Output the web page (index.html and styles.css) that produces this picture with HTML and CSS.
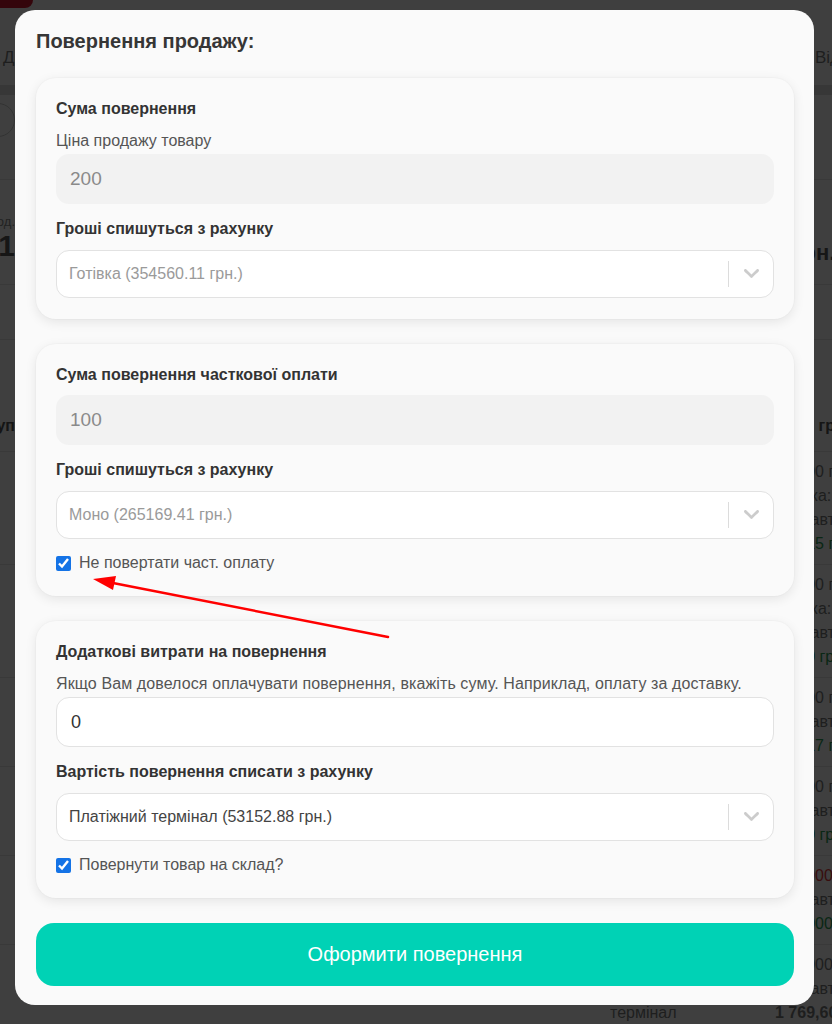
FILE: index.html
```html
<!DOCTYPE html>
<html lang="uk">
<head>
<meta charset="utf-8">
<title>Повернення продажу</title>
<link rel="stylesheet" href="styles.css">
</head>
<body>
<div class="app">
  <div class="app-top"><span class="brand"></span></div>
  <nav class="row tabs"><span class="l">Дашборд</span><span class="m"></span><span class="t"></span><span class="r tab-r">Відгуки</span></nav>
  <div class="band"></div>
  <div class="row toolbar"><span class="l end"><span class="pill"></span></span><span class="m"></span><span class="t"></span><span class="r"></span></div>
  <div class="row stats">
    <div class="l end col"><small>Сума прод.</small><b class="big">11</b></div>
    <span class="m"></span><span class="t"></span>
    <div class="r col"><b class="stat-r">0 грн.</b></div>
  </div>
  <div class="row filler"><span class="l"></span><span class="m"></span><span class="t"></span><span class="r"></span></div>
  <div class="row caption"><span class="l"></span><span class="m"></span><span class="t"></span><span class="r"></span></div>
  <div class="row thead"><b class="l end">Тип груп</b><span class="m"></span><span class="t"></span><b class="r">Ціна, грн</b></div>
  <div class="row trow"><span class="l"></span><span class="m"></span><span class="t"></span>
    <div class="r col"><span>12 200 грн</span><span>Готівка:</span><span>Тип: авто</span><span class="green">12 215 грн</span></div></div>
  <div class="row trow"><span class="l"></span><span class="m"></span><span class="t"></span>
    <div class="r col"><span>12 200 грн</span><span>Готівка:</span><span>Тип: авто</span><span class="green">12 20 грн</span></div></div>
  <div class="row trow"><span class="l"></span><span class="m"></span><span class="t"></span>
    <div class="r col"><span>12 200 грн</span><span>Тип: авто</span><span class="green">12 217 грн</span></div></div>
  <div class="row trow"><span class="l"></span><span class="m"></span><span class="t"></span>
    <div class="r col"><span>12 200 грн</span><span>Тип: авто</span><span class="green">12 20 грн</span></div></div>
  <div class="row trow"><span class="l"></span><span class="m"></span><span class="t"></span>
    <div class="r col"><span class="red">12 2000</span><span>Тип: авто</span><span class="green">12 2000</span></div></div>
  <div class="row trow"><span class="l"></span><span class="m"></span>
    <div class="t col"><span>&nbsp;</span><span>Платіжний</span><span>термінал</span></div>
    <div class="r col"><span>12 2000</span><span>Тип: авто</span><b>1 769,60</b></div></div>
</div>

<div class="overlay">
  <section class="modal">
    <h1 class="modal-title">Повернення продажу:</h1>

    <div class="card">
      <div class="card-title">Сума повернення</div>
      <div class="hint">Ціна продажу товару</div>
      <div class="input input-ro input-after-hint">200</div>
      <div class="card-title label">Гроші спишуться з рахунку</div>
      <div class="select">
        <span class="select-value placeholder">Готівка (354560.11 грн.)</span>
        <span class="sep"></span>
        <span class="indicator"><svg width="15" height="10" viewBox="4.2 7.2 11.6 7.6"><path fill="#ccc" d="M4.516 7.548c0.436-0.446 1.043-0.481 1.576 0l3.908 3.747 3.908-3.747c0.533-0.481 1.141-0.446 1.574 0 0.436 0.445 0.408 1.197 0 1.615-0.406 0.418-4.695 4.502-4.695 4.502-0.217 0.223-0.502 0.335-0.787 0.335s-0.57-0.112-0.789-0.335c0 0-4.287-4.084-4.695-4.502s-0.436-1.170 0-1.615z"/></svg></span>
      </div>
    </div>

    <div class="card">
      <div class="card-title">Сума повернення часткової оплати</div>
      <div class="input input-ro input-after-title">100</div>
      <div class="card-title label">Гроші спишуться з рахунку</div>
      <div class="select">
        <span class="select-value placeholder">Моно (265169.41 грн.)</span>
        <span class="sep"></span>
        <span class="indicator"><svg width="15" height="10" viewBox="4.2 7.2 11.6 7.6"><path fill="#ccc" d="M4.516 7.548c0.436-0.446 1.043-0.481 1.576 0l3.908 3.747 3.908-3.747c0.533-0.481 1.141-0.446 1.574 0 0.436 0.445 0.408 1.197 0 1.615-0.406 0.418-4.695 4.502-4.695 4.502-0.217 0.223-0.502 0.335-0.787 0.335s-0.57-0.112-0.789-0.335c0 0-4.287-4.084-4.695-4.502s-0.436-1.170 0-1.615z"/></svg></span>
      </div>
      <label class="check"><input type="checkbox" checked><span>Не повертати част. оплату</span></label>
    </div>

    <div class="card">
      <div class="card-title">Додаткові витрати на повернення</div>
      <div class="hint hint-long">Якщо Вам довелося оплачувати повернення, вкажіть суму. Наприклад, оплату за доставку.</div>
      <div class="input input-edit input-after-hint">0</div>
      <div class="card-title label">Вартість повернення списати з рахунку</div>
      <div class="select">
        <span class="select-value">Платіжний термінал (53152.88 грн.)</span>
        <span class="sep"></span>
        <span class="indicator"><svg width="15" height="10" viewBox="4.2 7.2 11.6 7.6"><path fill="#ccc" d="M4.516 7.548c0.436-0.446 1.043-0.481 1.576 0l3.908 3.747 3.908-3.747c0.533-0.481 1.141-0.446 1.574 0 0.436 0.445 0.408 1.197 0 1.615-0.406 0.418-4.695 4.502-4.695 4.502-0.217 0.223-0.502 0.335-0.787 0.335s-0.57-0.112-0.789-0.335c0 0-4.287-4.084-4.695-4.502s-0.436-1.170 0-1.615z"/></svg></span>
      </div>
      <label class="check"><input type="checkbox" checked><span>Повернути товар на склад?</span></label>
    </div>

    <button class="submit" type="button">Оформити повернення</button>

    <svg class="annotation" width="799" height="994" viewBox="0 0 799 994">
      <line x1="98" y1="573" x2="373" y2="627" stroke="#ff0000" stroke-width="2.5" stroke-linecap="round"/>
      <polygon points="78,569 101,566 98,580" fill="#ff0000"/>
    </svg>
  </section>
</div>
</body>
</html>
```

FILE: styles.css
```css
* { box-sizing: border-box; }

html, body {
  margin: 0;
  padding: 0;
}

body {
  width: 832px;
  height: 1024px;
  overflow: hidden;
  position: relative;
  background: #f9fbfa;
  font-family: "Liberation Sans", Arial, sans-serif;
}

/* ---------- background page (under the overlay) ---------- */
.app {
  width: 900px;
  color: #7a7a7a;
  font-size: 16px;
}

.row {
  display: grid;
  grid-template-columns: 15px 595px 165px 125px;
}

.row > * {
  overflow: hidden;
  white-space: nowrap;
}

.end {
  display: flex;
  justify-content: flex-end;
}

.col {
  display: flex;
  flex-direction: column;
}

.app-top { height: 30px; }

.brand {
  display: block;
  width: 33px;
  height: 8px;
  background: #d0142e;
  border-radius: 0 0 14px 0;
}

.tabs {
  height: 55px;
  align-items: center;
  font-size: 17px;
}

.tabs .l { padding-left: 3px; }
.tab-r { padding-left: 40px; }

.band {
  height: 10px;
  background: #dcdcdc;
}

.toolbar {
  height: 85px;
  border-bottom: 1px solid #e2e2e2;
}

.pill {
  flex: none;
  display: block;
  margin-top: 8px;
  width: 40px;
  height: 34px;
  border: 1px solid #c8c8c8;
  border-radius: 17px;
}

.stats {
  height: 105px;
  border-bottom: 1px solid #e2e2e2;
}

.stats .l {
  align-items: flex-end;
  justify-content: flex-start;
  padding-top: 34px;
}

.stats small {
  font-size: 13px;
  color: #8a8a8a;
}

.big {
  font-size: 30px;
  line-height: 34px;
  color: #5a5a5a;
}

.stats .r {
  padding-top: 60px;
}

.stat-r {
  font-size: 22px;
  color: #5a5a5a;
}

.filler {
  height: 55px;
  border-bottom: 1px solid #e2e2e2;
}

.caption { height: 60px; }

.thead {
  height: 52px;
  align-items: center;
  border-bottom: 1px solid #e2e2e2;
  color: #555;
  font-size: 16px;
}

.trow {
  padding: 8px 0;
  line-height: 24px;
  border-bottom: 1px solid #e2e2e2;
}

.green { color: #2a9a55; }
.red { color: #e03a3a; }

/* ---------- overlay + modal ---------- */
.overlay {
  position: fixed;
  inset: 0;
  background: rgba(0, 0, 0, 0.75);
  padding: 10px 0 0 15px;
}

.modal {
  position: relative;
  width: 799px;
  background: #fafafa;
  border-radius: 20px;
  padding: 18px 20px 19px 21px;
  color: #333;
}

.modal-title {
  margin: 0 0 24px;
  font-size: 20px;
  line-height: 26px;
  font-weight: bold;
  color: #363636;
}

.card {
  background: #fafafa;
  border-radius: 20px;
  padding: 21px 20px 21px;
  margin-bottom: 25px;
  box-shadow: 0 3px 12px rgba(0, 0, 0, 0.09), 0 0 0 1px rgba(0, 0, 0, 0.015);
}

.card-title {
  font-size: 16px;
  line-height: 20px;
  font-weight: bold;
  color: #333;
}

.label { margin-top: 15px; }

.hint {
  margin-top: 12px;
  font-size: 16px;
  line-height: 20px;
  color: #555;
  white-space: nowrap;
}

.hint-long { letter-spacing: 0.1px; }

.input {
  height: 50px;
  border-radius: 13px;
  padding: 0 14px;
  display: flex;
  align-items: center;
  font-size: 19px;
}

.input-after-hint { margin-top: 3px; }
.input-after-title { margin-top: 10px; }

.input-ro {
  background: #f2f2f2;
  color: #8a8a8a;
}

.input-edit {
  background: #fff;
  border: 1px solid #e2e2e2;
  color: #333;
  font-size: 18px;
}

.select {
  margin-top: 11px;
  height: 48px;
  background: #fff;
  border: 1px solid #e2e2e2;
  border-radius: 13px;
  display: flex;
  align-items: center;
}

.select-value {
  flex: 1;
  padding-left: 12px;
  font-size: 16px;
  color: #444;
}

.select-value.placeholder { color: #9a9a9a; }

.sep {
  width: 1px;
  height: 26px;
  background: #dcdcdc;
}

.indicator {
  width: 44px;
  display: flex;
  justify-content: center;
  align-items: center;
}

.check {
  margin: 15px 0 3px;
  display: flex;
  align-items: center;
  gap: 8px;
  height: 18px;
  font-size: 16px;
  color: #555;
}

.check input {
  margin: 0;
  width: 15px;
  height: 15px;
  accent-color: #1473e6;
}

.submit {
  display: block;
  width: 100%;
  height: 63px;
  border: 0;
  border-radius: 18px;
  background: #00d2b5;
  color: #fff;
  font-family: "Liberation Sans", Arial, sans-serif;
  font-size: 20px;
}

.annotation {
  position: absolute;
  left: 0;
  top: 0;
  pointer-events: none;
}
```
